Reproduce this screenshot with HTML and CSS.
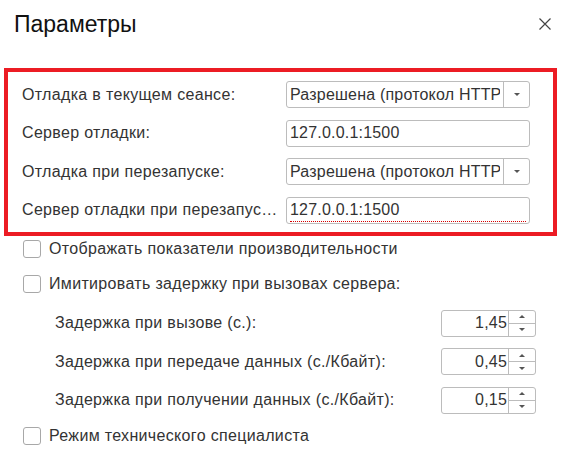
FILE: index.html
```html
<!DOCTYPE html>
<html lang="ru">
<head>
  <meta charset="UTF-8" />
  <title>Параметры</title>
  <link rel="stylesheet" href="styles.css">
</head>
<body>
  <div class="dialog">
    <header class="dialog-header">
      <h1>Параметры</h1>
      <button class="close-button" title="Закрыть">
        <svg width="12" height="12" viewBox="0 0 12 12">
          <path d="M0.5 0.5 L11.5 11.5 M11.5 0.5 L0.5 11.5" stroke="#444" stroke-width="1.2" fill="none"/>
        </svg>
      </button>
    </header>

    <section class="debug-group">
      <label class="field-label">Отладка в текущем сеансе:</label>
      <div class="select-field">
        <span class="field-value">Разрешена (протокол HTTP)</span>
        <span class="select-button"><i class="arrow-down"></i></span>
      </div>

      <label class="field-label">Сервер отладки:</label>
      <div class="text-field">
        <span class="field-value">127.0.0.1:1500</span>
      </div>

      <label class="field-label">Отладка при перезапуске:</label>
      <div class="select-field">
        <span class="field-value">Разрешена (протокол HTTP)</span>
        <span class="select-button"><i class="arrow-down"></i></span>
      </div>

      <label class="field-label">Сервер отладки при перезапуске:</label>
      <div class="text-field marked">
        <span class="field-value">127.0.0.1:1500</span>
      </div>
    </section>

    <div class="check-row first">
      <span class="checkbox"></span>
      <span>Отображать показатели производительности</span>
    </div>
    <div class="check-row">
      <span class="checkbox"></span>
      <span>Имитировать задержку при вызовах сервера:</span>
    </div>

    <div class="delay-list">
      <div class="delay-row">
        <span class="field-label">Задержка при вызове (с.):</span>
        <div class="spin-field">
          <span class="spin-value">1,45</span>
          <span class="spin-buttons">
            <span class="spin-half"><i class="arrow-up"></i></span>
            <span class="spin-half"><i class="arrow-down"></i></span>
          </span>
        </div>
      </div>
      <div class="delay-row">
        <span class="field-label">Задержка при передаче данных (с./Кбайт):</span>
        <div class="spin-field">
          <span class="spin-value">0,45</span>
          <span class="spin-buttons">
            <span class="spin-half"><i class="arrow-up"></i></span>
            <span class="spin-half"><i class="arrow-down"></i></span>
          </span>
        </div>
      </div>
      <div class="delay-row">
        <span class="field-label">Задержка при получении данных (с./Кбайт):</span>
        <div class="spin-field">
          <span class="spin-value">0,15</span>
          <span class="spin-buttons">
            <span class="spin-half"><i class="arrow-up"></i></span>
            <span class="spin-half"><i class="arrow-down"></i></span>
          </span>
        </div>
      </div>
    </div>

    <div class="check-row last">
      <span class="checkbox"></span>
      <span>Режим технического специалиста</span>
    </div>
  </div>
</body>
</html>
```

FILE: styles.css
```css
* {
  margin: 0;
  padding: 0;
  box-sizing: border-box;
}

body {
  font-family: "Liberation Sans", Arial, sans-serif;
  font-size: 16px;
  letter-spacing: 0.33px;
  color: #333;
  background-color: #ffffff;
}

.dialog {
  width: 568px;
  height: 469px;
  overflow: hidden;
}

.dialog-header {
  display: flex;
  align-items: center;
  justify-content: space-between;
  height: 48px;
  padding: 0 17px 0 14px;
}

.dialog-header h1 {
  font-size: 23px;
  font-weight: normal;
  letter-spacing: 0;
  color: #111;
}

.close-button {
  width: 12px;
  height: 12px;
  border: none;
  background: transparent;
  display: flex;
}

.debug-group {
  margin: 20px 11px 0 4px;
  border: 4px solid #ec1c24;
  padding: 9px 23px 8px 14px;
  display: grid;
  grid-template-columns: 1fr 244px;
  column-gap: 8px;
  row-gap: 11.5px;
  align-items: center;
}

.field-label {
  white-space: nowrap;
  overflow: hidden;
  text-overflow: ellipsis;
}

.select-field,
.text-field,
.spin-field {
  height: 27px;
  border: 1px solid #bcbcbc;
  border-radius: 3px;
  display: flex;
  align-items: center;
  font-size: 16px;
  letter-spacing: 0.2px;
  color: #333;
  background-color: #fff;
}

.field-value {
  flex: 1;
  padding-left: 3px;
  white-space: nowrap;
  overflow: hidden;
}

.select-field .field-value {
  align-self: stretch;
  display: flex;
  align-items: center;
  margin-right: 3px;
}

.select-button {
  width: 26px;
  height: 100%;
  border-left: 1px solid #bcbcbc;
  display: flex;
  align-items: center;
  justify-content: center;
}

.arrow-down,
.arrow-up {
  width: 0;
  height: 0;
  border-left: 3px solid transparent;
  border-right: 3px solid transparent;
}

.arrow-down {
  border-top: 3px solid #555;
}

.arrow-up {
  border-bottom: 3px solid #555;
}

.text-field.marked {
  position: relative;
}

.text-field.marked::after {
  content: "";
  position: absolute;
  left: 3px;
  right: 3px;
  bottom: 1px;
  border-bottom: 1px dotted #d60000;
}

.check-row {
  display: flex;
  align-items: center;
  gap: 8px;
  padding-left: 23px;
  height: 18px;
}

.check-row.first {
  margin-top: 4px;
}

.check-row + .check-row {
  margin-top: 17px;
}

.check-row.last {
  margin-top: 13.5px;
}

.checkbox {
  width: 18px;
  height: 18px;
  border: 1px solid #a8a8a8;
  border-radius: 3px;
  flex-shrink: 0;
}

.delay-list {
  margin-top: 17px;
  padding: 0 32px 0 55px;
  display: flex;
  flex-direction: column;
  gap: 11.5px;
}

.delay-row {
  display: flex;
  align-items: center;
  justify-content: space-between;
}

.spin-field {
  width: 95px;
}

.spin-value {
  flex: 1;
  text-align: right;
  padding-right: 1px;
}

.spin-buttons {
  width: 27px;
  height: 100%;
  border-left: 1px solid #bcbcbc;
  display: flex;
  flex-direction: column;
}

.spin-half {
  flex: 1;
  display: flex;
  align-items: center;
  justify-content: center;
}

.spin-half + .spin-half {
  border-top: 1px solid #bcbcbc;
}
```
